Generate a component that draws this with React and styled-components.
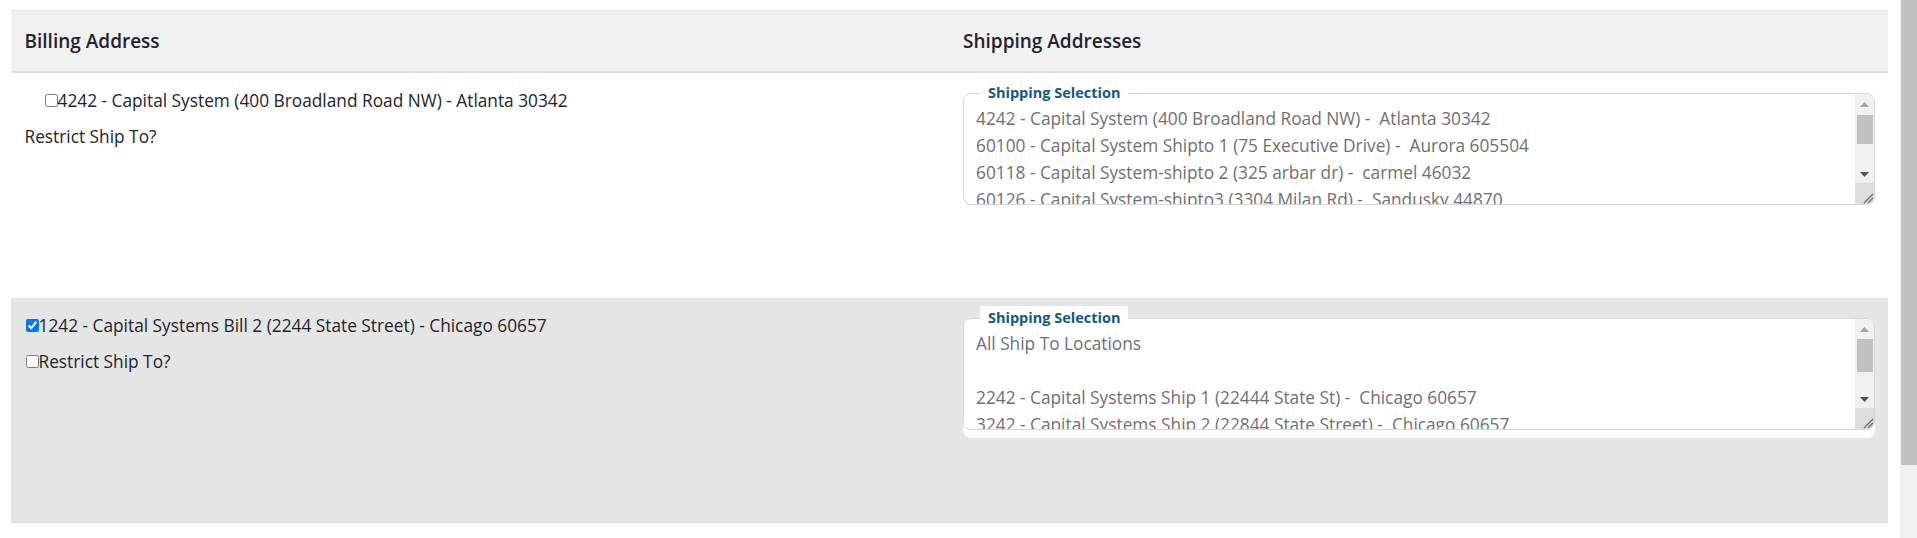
import React from "react";
import styled, { createGlobalStyle } from "styled-components";

const GlobalStyle = createGlobalStyle`
  html, body {
    margin: 0;
    padding: 0;
    background: #fff;
  }
  body {
    font-family: "Open Sans", "Noto Sans", sans-serif;
    color: #212529;
  }
`;

const rows = [
  {
    id: "4242",
    shaded: false,
    billing: "4242 - Capital System (400 Broadland Road NW) - Atlanta 30342",
    indent: 20,
    checked: false,
    restrictBox: false,
    options: [
      "4242 - Capital System (400 Broadland Road NW) -  Atlanta 30342",
      "60100 - Capital System Shipto 1 (75 Executive Drive) -  Aurora 605504",
      "60118 - Capital System-shipto 2 (325 arbar dr) -  carmel 46032",
      "60126 - Capital System-shipto3 (3304 Milan Rd) -  Sandusky 44870",
      "60131 - Capital System-shipto4 (12 Main St) -  Dayton 45402",
    ],
    thumb: { top: 1, height: 29 },
  },
  {
    id: "1242",
    shaded: true,
    billing: "1242 - Capital Systems Bill 2 (2244 State Street) - Chicago 60657",
    indent: 1,
    checked: true,
    restrictBox: true,
    options: [
      "All Ship To Locations",
      "",
      "2242 - Capital Systems Ship 1 (22444 State St) -  Chicago 60657",
      "3242 - Capital Systems Ship 2 (22844 State Street) -  Chicago 60657",
    ],
    thumb: { top: 0, height: 33 },
  },
];

const Page = styled.div`
  display: flex;
  height: 100vh;
  overflow: hidden;
`;

const Content = styled.main`
  flex: 1;
  min-width: 0;
  padding: 10px 12px 0 11px;
`;

const PageScrollbar = styled.div`
  width: 17px;
  flex-shrink: 0;
  background: #f0f0f0;
  padding-left: 1px;
  box-sizing: border-box;
`;

const PageThumb = styled.div`
  height: 465px;
  background: #c1c1c1;
`;

const HeaderRow = styled.div`
  display: grid;
  grid-template-columns: 1fr 1fr;
  background: #f1f1f1;
  border-top: 1px solid #e2e4e8;
  border-bottom: 2px solid #dee2e6;
`;

const HeadCell = styled.div`
  padding: 15px 13.5px;
  font-size: 19px;
  line-height: 30px;
  font-weight: 600;
  color: #212529;
`;

const Row = styled.div`
  display: grid;
  grid-template-columns: 1fr 1fr;
  box-sizing: border-box;
  height: 225px;
  background: ${(p) => (p.$shaded ? "#e5e5e5" : "#fff")};
  border-bottom: 1px solid ${(p) => (p.$shaded ? "#d7d9e0" : "#fff")};
`;

const BillingCell = styled.div`
  display: flex;
  flex-direction: column;
  gap: 9px;
  padding: 13.5px 13.5px;
`;

const Line = styled.label`
  display: flex;
  align-items: center;
  font-size: 17.3px;
  line-height: 27px;
  color: #212529;
  white-space: pre;
`;

const Check = styled.input.attrs({ type: "checkbox" })`
  width: 13px;
  height: 13px;
  margin: 0 0 0 ${(p) => p.$indent}px;
  flex-shrink: 0;
`;

const ShippingCell = styled.div`
  padding: 20px 13.5px 0;
`;

const Field = styled.div`
  position: relative;
  background: #fff;
  border-radius: 8px;
  padding-bottom: 8px;
`;

const Legend = styled.span`
  position: absolute;
  top: -12px;
  left: 17px;
  padding: 0 8px;
  background: #fff;
  font-size: 14.5px;
  line-height: 24px;
  font-weight: 700;
  color: #13578a;
`;

const ListBox = styled.div`
  display: flex;
  height: 112px;
  box-sizing: border-box;
  border: 1px solid #d6d6d6;
  border-radius: 8px;
  overflow: hidden;
  background: #fff;
`;

const Options = styled.div`
  flex: 1;
  min-width: 0;
  padding: 11px 12px 0;
  overflow: hidden;
`;

const Option = styled.div`
  height: 27px;
  font-size: 17.3px;
  line-height: 27px;
  color: #707070;
  white-space: pre;
`;

const ScrollColumn = styled.div`
  display: flex;
  flex-direction: column;
  width: 19px;
  flex-shrink: 0;
  background: #f0f0f0;
`;

const ArrowButton = styled.div`
  display: flex;
  align-items: center;
  justify-content: center;
  height: ${(p) => p.$h}px;
  flex-shrink: 0;
`;

const Track = styled.div`
  flex: 1;
  padding-left: 2px;
  padding-right: 1px;
`;

const Thumb = styled.div`
  background: #c1c1c1;
`;

const Resizer = styled.div`
  height: 21px;
  flex-shrink: 0;
  background: #dcdcdc;
  display: flex;
  align-items: flex-end;
  justify-content: flex-end;
`;

const Arrow = ({ up }) => (
  <svg width="9" height="5" viewBox="0 0 9 5">
    {up ? (
      <polygon points="0,5 9,5 4.5,0" fill="#a3a3a3" />
    ) : (
      <polygon points="0,0 9,0 4.5,5" fill="#505050" />
    )}
  </svg>
);

const Grip = () => (
  <svg width="12" height="12" viewBox="0 0 12 12">
    <line x1="2" y1="11" x2="11" y2="2" stroke="#6a6a6a" strokeWidth="1.2" />
    <line x1="6" y1="11" x2="11" y2="6" stroke="#6a6a6a" strokeWidth="1.2" />
  </svg>
);

const ShippingSelection = ({ options, thumb }) => (
  <Field>
    <Legend>Shipping Selection</Legend>
    <ListBox>
      <Options>
        {options.map((o, i) => (
          <Option key={i}>{o || " "}</Option>
        ))}
      </Options>
      <ScrollColumn>
        <ArrowButton $h={20}>
          <Arrow up />
        </ArrowButton>
        <Track>
          <Thumb style={{ marginTop: thumb.top, height: thumb.height }} />
        </Track>
        <ArrowButton $h={18}>
          <Arrow />
        </ArrowButton>
        <Resizer>
          <Grip />
        </Resizer>
      </ScrollColumn>
    </ListBox>
  </Field>
);

const App = () => {
  return (
    <Page>
      <GlobalStyle />
      <Content>
        <HeaderRow>
          <HeadCell>Billing Address</HeadCell>
          <HeadCell>Shipping Addresses</HeadCell>
        </HeaderRow>
        {rows.map((r) => (
          <Row key={r.id} $shaded={r.shaded}>
            <BillingCell>
              <Line>
                <Check $indent={r.indent} defaultChecked={r.checked} />
                {r.billing}
              </Line>
              <Line>
                {r.restrictBox && <Check $indent={1} />}
                Restrict Ship To?
              </Line>
            </BillingCell>
            <ShippingCell>
              <ShippingSelection options={r.options} thumb={r.thumb} />
            </ShippingCell>
          </Row>
        ))}
      </Content>
      <PageScrollbar>
        <PageThumb />
      </PageScrollbar>
    </Page>
  );
};

export default App;
